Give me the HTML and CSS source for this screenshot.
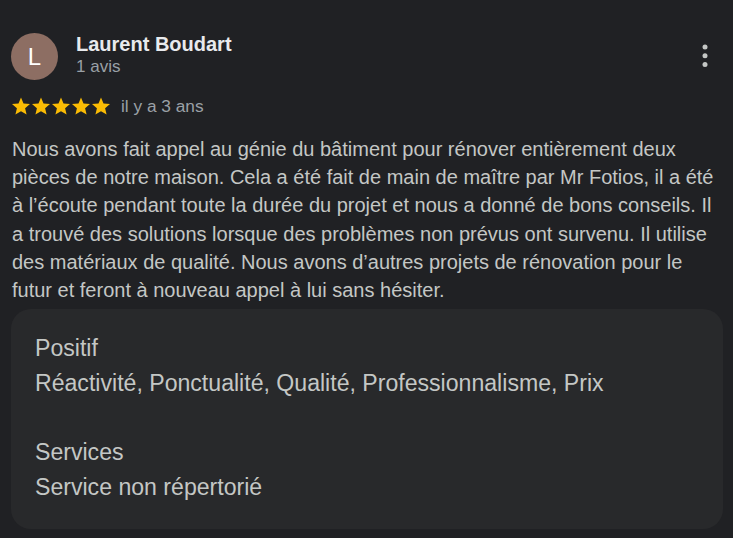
FILE: index.html
```html
<!DOCTYPE html>
<html lang="fr">
<head>
<meta charset="utf-8">
<link rel="stylesheet" href="styles.css">
</head>
<body>
<div class="review">
  <div class="header">
    <div class="avatar">L</div>
    <div class="who">
      <div class="name">Laurent Boudart</div>
      <div class="count">1 avis</div>
    </div>
    <button class="more" aria-label="Plus">
      <svg width="6" height="26" viewBox="0 0 6 26"><circle cx="3" cy="4" r="2.5"/><circle cx="3" cy="12.7" r="2.5"/><circle cx="3" cy="21.4" r="2.5"/></svg>
    </button>
  </div>
  <div class="meta">
    <div class="stars">
      <svg viewBox="0 0 24 24"><path d="M12 1.8l3 7.2 7.8.6-5.9 5.1 1.8 7.6L12 18.2l-6.7 4.1 1.8-7.6L1.2 9.6 9 9z"/></svg>
      <svg viewBox="0 0 24 24"><path d="M12 1.8l3 7.2 7.8.6-5.9 5.1 1.8 7.6L12 18.2l-6.7 4.1 1.8-7.6L1.2 9.6 9 9z"/></svg>
      <svg viewBox="0 0 24 24"><path d="M12 1.8l3 7.2 7.8.6-5.9 5.1 1.8 7.6L12 18.2l-6.7 4.1 1.8-7.6L1.2 9.6 9 9z"/></svg>
      <svg viewBox="0 0 24 24"><path d="M12 1.8l3 7.2 7.8.6-5.9 5.1 1.8 7.6L12 18.2l-6.7 4.1 1.8-7.6L1.2 9.6 9 9z"/></svg>
      <svg viewBox="0 0 24 24"><path d="M12 1.8l3 7.2 7.8.6-5.9 5.1 1.8 7.6L12 18.2l-6.7 4.1 1.8-7.6L1.2 9.6 9 9z"/></svg>
    </div>
    <span class="date">il y a 3 ans</span>
  </div>
  <p class="text">Nous avons fait appel au génie du bâtiment pour rénover entièrement deux pièces de notre maison. Cela a été fait de main de maître par Mr Fotios, il a été à l’écoute pendant toute la durée du projet et nous a donné de bons conseils. Il a trouvé des solutions lorsque des problèmes non prévus ont survenu. Il utilise des matériaux de qualité. Nous avons d’autres projets de rénovation pour le futur et feront à nouveau appel à lui sans hésiter.</p>
  <div class="details">
    <div class="line">Positif</div>
    <div class="line">Réactivité, Ponctualité, Qualité, Professionnalisme, Prix</div>
    <div class="line">&nbsp;</div>
    <div class="line">Services</div>
    <div class="line">Service non répertorié</div>
  </div>
</div>
</body>
</html>
```

FILE: styles.css
```css
html, body {
  margin: 0;
  background: #202124;
}
body {
  font-family: "Liberation Sans", Arial, sans-serif;
  color: #c4c7c5;
}
.review {
  padding: 33px 10px 0 11px;
}
.header {
  display: flex;
  align-items: flex-start;
}
.avatar {
  width: 47px;
  height: 47px;
  border-radius: 50%;
  background: #8d6e63;
  color: #ffffff;
  font-size: 24px;
  display: flex;
  align-items: center;
  justify-content: center;
  flex: none;
}
.who {
  margin-left: 18px;
  flex: 1;
}
.name {
  font-size: 20px;
  font-weight: bold;
  color: #e8eaed;
  line-height: 22px;
}
.count {
  font-size: 17px;
  color: #9aa0a6;
  line-height: 20px;
  margin-top: 2px;
}
.more {
  background: none;
  border: 0;
  padding: 0;
  margin: 10px 14px 0 0;
  width: 8px;
  display: flex;
  justify-content: center;
}
.more svg {
  fill: #c4c7c5;
}
.meta {
  display: flex;
  align-items: center;
  margin-top: 16px;
  height: 20px;
}
.stars {
  display: flex;
}
.stars svg {
  width: 20px;
  height: 20px;
  fill: #fbbc04;
}
.date {
  margin-left: 10px;
  font-size: 17.3px;
  color: #9aa0a6;
}
.text {
  margin: 19px 0 0 1px;
  font-size: 20px;
  line-height: 28.2px;
  color: #c4c7c5;
}
.details {
  margin-top: 5px;
  background: #28292b;
  border-radius: 20px;
  padding: 22px 24px 24px 24px;
  font-size: 23.1px;
  line-height: 34.7px;
  color: #c4c7c5;
}
```
